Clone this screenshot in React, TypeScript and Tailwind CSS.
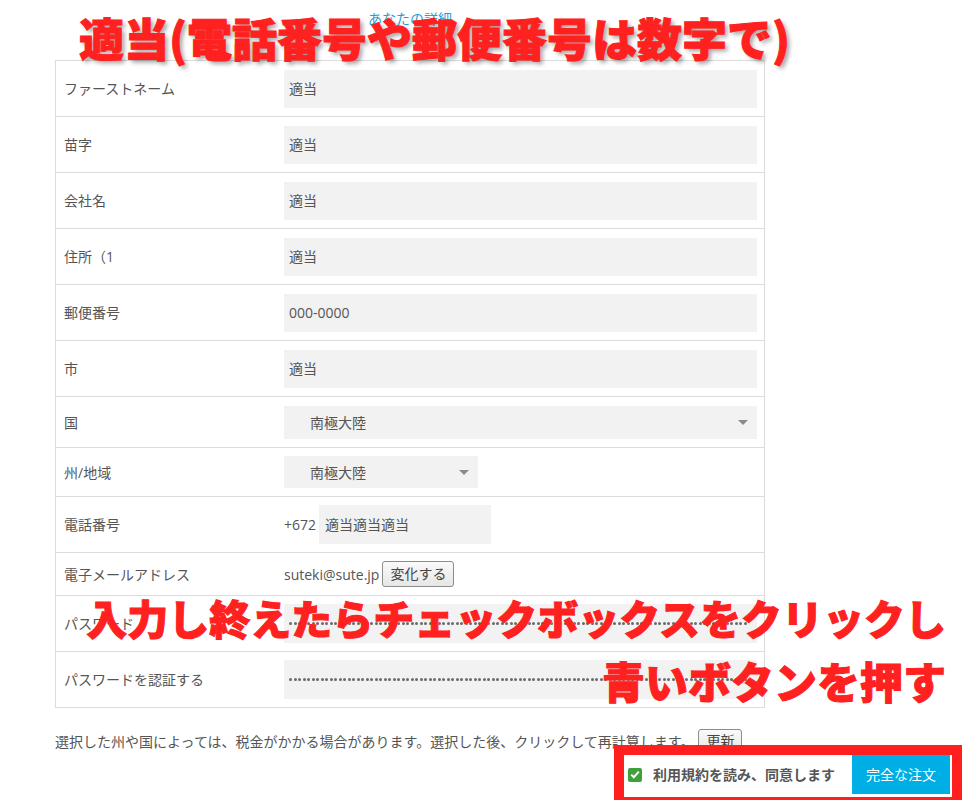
import type { ReactNode } from 'react'

const labelText = 'text-[14px] text-[#555]'

function Row({ label, h, first, children }: { label: string; h: string; first?: boolean; children: ReactNode }) {
  return (
    <div className={`flex items-center ${h} ${first ? '' : 'border-t border-[#dcdcdc]'}`}>
      <div className={`w-[228px] shrink-0 pl-[8px] ${labelText}`}>{label}</div>
      <div className="flex flex-1 items-center pr-[7px]">{children}</div>
    </div>
  )
}

function Field({ value, w = 'w-full' }: { value: string; w?: string }) {
  return (
    <div className={`flex h-[38px] items-center bg-[#f2f2f2] pl-[5px] text-[14px] text-[#555] ${w}`}>
      {value}
    </div>
  )
}

function SelectBox({ value, w, h }: { value: string; w: string; h: string }) {
  return (
    <div className={`flex items-center justify-between bg-[#f2f2f2] pl-[26px] pr-[9px] text-[14px] text-[#555] ${w} ${h}`}>
      <span>{value}</span>
      <svg width="10" height="5" viewBox="0 0 10 5">
        <path d="M0 0h10L5 5z" fill="#8a8a8a" />
      </svg>
    </div>
  )
}

function Dots() {
  return (
    <div className="flex h-[39px] w-full items-center gap-[1.5px] overflow-hidden bg-[#f2f2f2] pl-[5px]">
      {Array.from({ length: 102 }).map((_, i) => (
        <span key={i} className="h-[3px] w-[3px] shrink-0 rounded-full bg-[#6a6a6a]" />
      ))}
    </div>
  )
}

function SmallButton({ children }: { children: ReactNode }) {
  return (
    <button className="h-[26px] rounded-[3px] border border-[#8c8c8c] bg-gradient-to-b from-[#fafafa] to-[#e6e6e6] px-[7px] text-[14px] leading-none text-[#444]">
      {children}
    </button>
  )
}

export default function App() {
  return (
    <div className="relative h-[800px] w-[968px] overflow-hidden bg-white font-['Open_Sans','Noto_Sans_CJK_JP',sans-serif]">
      <div className="pl-[55px] pr-[18px] pt-[10px]">
        {/* section heading, mostly hidden behind the annotation */}
        <div className="w-[710px] text-center text-[14px] leading-[18px] text-[#1ea0dc]">あなたの詳細</div>

        <div className="mt-[32px] w-[710px] border border-[#dcdcdc]">
          <Row label="ファーストネーム" h="h-[55px]" first>
            <Field value="適当" />
          </Row>
          <Row label="苗字" h="h-[56px]">
            <Field value="適当" />
          </Row>
          <Row label="会社名" h="h-[56px]">
            <Field value="適当" />
          </Row>
          <Row label="住所（1" h="h-[56px]">
            <Field value="適当" />
          </Row>
          <Row label="郵便番号" h="h-[56px]">
            <Field value="000-0000" />
          </Row>
          <Row label="市" h="h-[56px]">
            <Field value="適当" />
          </Row>
          <Row label="国" h="h-[51px]">
            <SelectBox value="南極大陸" w="w-full" h="h-[33px]" />
          </Row>
          <Row label="州/地域" h="h-[49px]">
            <SelectBox value="南極大陸" w="w-[194px]" h="h-[32px]" />
          </Row>
          <Row label="電話番号" h="h-[56px]">
            <span className="mr-[3px] text-[14px] text-[#555]">+672</span>
            <div className="flex h-[39px] w-[172px] items-center bg-[#f2f2f2] pl-[6px] text-[14px] text-[#555]">
              適当適当適当
            </div>
          </Row>
          <Row label="電子メールアドレス" h="h-[43px]">
            <span className="mr-[3px] text-[14px] text-[#555]">suteki@sute.jp</span>
            <SmallButton>変化する</SmallButton>
          </Row>
          <Row label="パスワード" h="h-[56px]">
            <Dots />
          </Row>
          <Row label="パスワードを認証する" h="h-[56px]">
            <Dots />
          </Row>
        </div>

        <div className="mt-[21px] flex items-center gap-[4px] text-[14px] text-[#555]">
          <span>選択した州や国によっては、税金がかかる場合があります。選択した後、クリックして再計算します。</span>
          <button className="h-[24px] rounded-[3px] border border-[#8c8c8c] bg-gradient-to-b from-[#fafafa] to-[#e6e6e6] px-[7px] text-[14px] leading-none text-[#444]">
            更新
          </button>
        </div>

        <div className="mt-[2px] flex items-center justify-end">
          <label className="flex items-center gap-[11px] pr-[17px] text-[14px] font-bold text-[#555]">
            <span className="flex h-[14px] w-[14px] items-center justify-center rounded-[2px] bg-[#3f9f3a]">
              <svg width="10" height="9" viewBox="0 0 10 9">
                <path d="M1.2 4.6l2.6 2.6L8.8 1.6" fill="none" stroke="#fff" strokeWidth="2" />
              </svg>
            </span>
            利用規約を読み、同意します
          </label>
          <button className="h-[39px] w-[98px] bg-[#00aee6] text-[14px] text-white">完全な注文</button>
        </div>
      </div>

      {/* annotations drawn over the screenshot */}
      <div className="pointer-events-none absolute left-[79px] top-[8px] font-['Noto_Sans_CJK_JP',sans-serif] text-[45px] font-black leading-[60px] text-[#ff2020] [-webkit-text-stroke:1px_#ff2020] [text-shadow:3px_3px_4px_rgba(0,0,0,0.35)]">
        適当(電話番号や郵便番号は数字で)
      </div>
      <div className="pointer-events-none absolute right-[22px] top-[586px] text-right font-['Noto_Sans_CJK_JP',sans-serif] font-black text-[#ff2020] [-webkit-text-stroke:1px_#ff2020]">
        <div className="text-[41px] leading-[63px]">入力し終えたらチェックボックスをクリックし</div>
        <div className="text-[43px] leading-[63px]">青いボタンを押す</div>
      </div>
      <div className="pointer-events-none absolute left-[614px] top-[745px] h-[62px] w-[348px] border-[10px] border-[#ff1f1f]" />
    </div>
  )
}
